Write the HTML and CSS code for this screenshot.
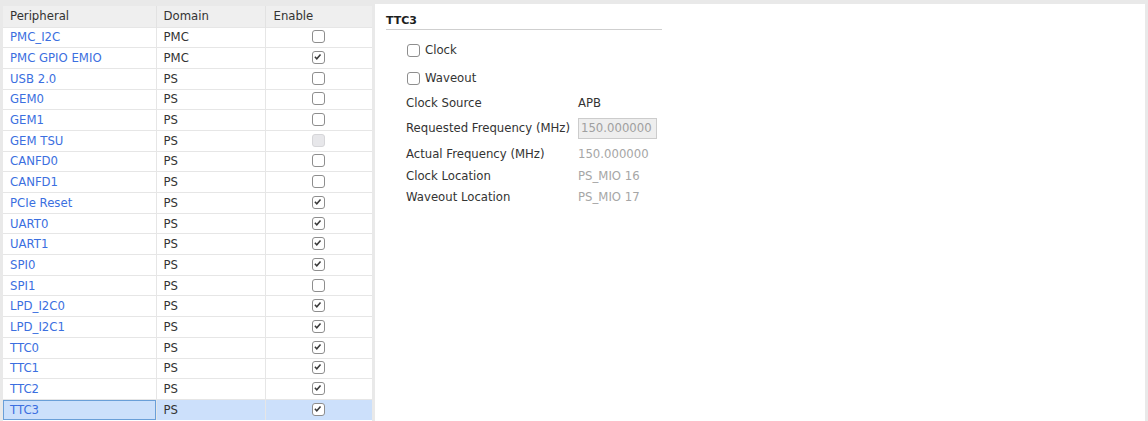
FILE: index.html
```html
<!DOCTYPE html>
<html>
<head>
<meta charset="utf-8">
<link rel="stylesheet" href="styles.css">
</head>
<body>
<div class="app">
  <div class="left">
    <table class="grid">
      <thead>
        <tr><th class="c1">Peripheral</th><th class="c2">Domain</th><th class="c3">Enable</th></tr>
      </thead>
      <tbody>
        <tr><td class="lnk">PMC_I2C</td><td>PMC</td><td class="cc"><span class="cb"></span></td></tr>
        <tr><td class="lnk">PMC GPIO EMIO</td><td>PMC</td><td class="cc"><span class="cb on"><svg viewBox="0 0 13 13"><path d="M3.2 6.6 L5.5 9 L9.9 3.9"/></svg></span></td></tr>
        <tr><td class="lnk">USB 2.0</td><td>PS</td><td class="cc"><span class="cb"></span></td></tr>
        <tr><td class="lnk">GEM0</td><td>PS</td><td class="cc"><span class="cb"></span></td></tr>
        <tr><td class="lnk">GEM1</td><td>PS</td><td class="cc"><span class="cb"></span></td></tr>
        <tr><td class="lnk">GEM TSU</td><td>PS</td><td class="cc"><span class="cb dis"></span></td></tr>
        <tr><td class="lnk">CANFD0</td><td>PS</td><td class="cc"><span class="cb"></span></td></tr>
        <tr><td class="lnk">CANFD1</td><td>PS</td><td class="cc"><span class="cb"></span></td></tr>
        <tr><td class="lnk">PCIe Reset</td><td>PS</td><td class="cc"><span class="cb on"><svg viewBox="0 0 13 13"><path d="M3.2 6.6 L5.5 9 L9.9 3.9"/></svg></span></td></tr>
        <tr><td class="lnk">UART0</td><td>PS</td><td class="cc"><span class="cb on"><svg viewBox="0 0 13 13"><path d="M3.2 6.6 L5.5 9 L9.9 3.9"/></svg></span></td></tr>
        <tr><td class="lnk">UART1</td><td>PS</td><td class="cc"><span class="cb on"><svg viewBox="0 0 13 13"><path d="M3.2 6.6 L5.5 9 L9.9 3.9"/></svg></span></td></tr>
        <tr><td class="lnk">SPI0</td><td>PS</td><td class="cc"><span class="cb on"><svg viewBox="0 0 13 13"><path d="M3.2 6.6 L5.5 9 L9.9 3.9"/></svg></span></td></tr>
        <tr><td class="lnk">SPI1</td><td>PS</td><td class="cc"><span class="cb"></span></td></tr>
        <tr><td class="lnk">LPD_I2C0</td><td>PS</td><td class="cc"><span class="cb on"><svg viewBox="0 0 13 13"><path d="M3.2 6.6 L5.5 9 L9.9 3.9"/></svg></span></td></tr>
        <tr><td class="lnk">LPD_I2C1</td><td>PS</td><td class="cc"><span class="cb on"><svg viewBox="0 0 13 13"><path d="M3.2 6.6 L5.5 9 L9.9 3.9"/></svg></span></td></tr>
        <tr><td class="lnk">TTC0</td><td>PS</td><td class="cc"><span class="cb on"><svg viewBox="0 0 13 13"><path d="M3.2 6.6 L5.5 9 L9.9 3.9"/></svg></span></td></tr>
        <tr><td class="lnk">TTC1</td><td>PS</td><td class="cc"><span class="cb on"><svg viewBox="0 0 13 13"><path d="M3.2 6.6 L5.5 9 L9.9 3.9"/></svg></span></td></tr>
        <tr><td class="lnk">TTC2</td><td>PS</td><td class="cc"><span class="cb on"><svg viewBox="0 0 13 13"><path d="M3.2 6.6 L5.5 9 L9.9 3.9"/></svg></span></td></tr>
        <tr class="sel"><td class="lnk focus">TTC3</td><td>PS</td><td class="cc"><span class="cb on"><svg viewBox="0 0 13 13"><path d="M3.2 6.6 L5.5 9 L9.9 3.9"/></svg></span></td></tr>
      </tbody>
    </table>
  </div>
  <div class="right">
    <div class="title">TTC3</div>
    <div class="form">
      <div class="row r-cb"><span class="cb"></span><span class="cblabel">Clock</span></div>
      <div class="row r-cb"><span class="cb"></span><span class="cblabel">Waveout</span></div>
      <div class="row r-src"><span class="lbl">Clock Source</span><span class="val">APB</span></div>
      <div class="row r-req"><span class="lbl">Requested Frequency (MHz)</span><span class="inp">150.000000</span></div>
      <div class="row r-act"><span class="lbl">Actual Frequency (MHz)</span><span class="val muted">150.000000</span></div>
      <div class="row r-cl"><span class="lbl">Clock Location</span><span class="val muted">PS_MIO 16</span></div>
      <div class="row r-wl"><span class="lbl">Waveout Location</span><span class="val muted">PS_MIO 17</span></div>
    </div>
  </div>
</div>
</body>
</html>
```
FILE: styles.css
```css
html, body {
  margin: 0;
  padding: 0;
}
body {
  background: #e9e9e9;
  font-family: "DejaVu Sans", "Liberation Sans", sans-serif;
  font-size: 11.7px;
  color: #333333;
  width: 1148px;
  height: 421px;
  overflow: hidden;
}
.app {
  display: flex;
  gap: 3px;
  padding: 4px 3px 0 3px;
  height: 417px;
}
.left {
  width: 369px;
  background: #ffffff;
  height: 417px;
}
.grid {
  border-collapse: collapse;
  table-layout: fixed;
  width: 369px;
}
.grid th {
  background: #efefef;
  font-weight: normal;
  text-align: left;
  height: 22px;
  padding: 0 0 0 7px;
  border-right: 1px solid #e2e2e2;
  border-top: 2px solid #e9e9e9;
  box-sizing: border-box;
  color: #333333;
}
.grid th.c1 { width: 153px; }
.grid th.c2 { width: 109px; }
.grid th.c3 { border-right: none; padding-left: 8px; }
.grid td {
  height: 20.7px;
  padding: 0 0 0 7px;
  border-top: 1px solid #e6e6e6;
  border-right: 1px solid #e6e6e6;
  box-sizing: border-box;
  white-space: nowrap;
  line-height: 18px;
}
.grid td:last-child { border-right: none; }
.grid td.lnk { color: #3b6fe0; }
.grid td.cc {
  text-align: center;
  padding: 0;
}
.grid td.cc .cb { vertical-align: middle; position: relative; top: -1px; }
.grid tr.sel td { background: #cce0fb; }
.grid td.focus { box-shadow: inset 0 0 0 1px #6a9fd8; }
.cb {
  display: inline-block;
  width: 13px;
  height: 13px;
  box-sizing: border-box;
  border: 1px solid #8e8e8e;
  border-radius: 3px;
  background: #ffffff;
}
.cb svg {
  display: block;
  width: 11px;
  height: 11px;
  margin: 0;
}
.cb svg path {
  fill: none;
  stroke: #3a3a3a;
  stroke-width: 1.8;
  transform: translate(-1px, -1px);
}
.cb.dis {
  background: #e7e7ea;
  border-color: #d6d6d9;
}
.right {
  flex: 1;
  background: #ffffff;
  padding: 9px 0 0 11px;
  height: 417px;
  box-sizing: border-box;
}
.title {
  width: 276px;
  font-weight: bold;
  font-size: 11px;
  line-height: 16px;
  border-bottom: 1px solid #cfcfcf;
  color: #1e1e1e;
}
.form {
  padding-left: 20px;
  margin-top: 6px;
  display: flex;
  flex-direction: column;
}
.row {
  display: flex;
  align-items: center;
}
.r-cb { height: 28px; }
.r-cb .cb { margin-left: 1px; }
.cblabel { margin-left: 5px; }
.r-src { height: 22px; }
.r-req { height: 28px; }
.r-act { height: 24px; }
.r-cl { height: 20px; }
.r-wl { height: 22px; }
.lbl {
  width: 172px;
  flex: none;
}
.val { color: #333333; }
.val.muted { color: #a6a6a6; }
.inp {
  width: 79px;
  height: 21px;
  box-sizing: border-box;
  border: 1px solid #cccccc;
  background: #eeeeee;
  color: #a0a0a0;
  padding-left: 2px;
  line-height: 19px;
}
```
